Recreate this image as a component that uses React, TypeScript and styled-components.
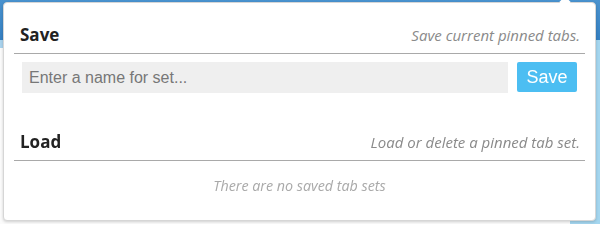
import styled, { createGlobalStyle } from "styled-components";

const Global = createGlobalStyle`
	html, body {
		margin: 0;
		padding: 0;
		width: 600px;
		height: 224px;
		overflow: hidden;
	}
	* {
		box-sizing: border-box;
	}
`;

/* the browser page that peeks out behind the popup */
const Backdrop = styled.div`
	position: relative;
	width: 600px;
	height: 224px;
	display: flex;
	flex-direction: column;
	background-color: #f4f5f6;
`;

const TopBar = styled.div`
	height: 40px;
	background: linear-gradient(#4a93cf, #3580c2);
`;

const PageBody = styled.div`
	flex-grow: 1;
	display: flex;
`;

const PageLeft = styled.div`
	flex-grow: 1;
	border-top: 8px solid #a9d3ee;
	background-color: #fbfbfb;
`;

const PageRight = styled.div`
	width: 30px;
	background-color: #a4d6ef;
`;

/* popup */
const Popup = styled.div`
	position: absolute;
	top: 2px;
	left: 3px;
	width: 593px;
	height: 219px;
	padding: 20px 10px 0;
	background-color: #fff;
	border: 1px solid #d6d6d6;
	border-radius: 4px;
	box-shadow: 0 1px 3px rgba(0, 0, 0, 0.18);
	font-family: "Open Sans", "Liberation Sans", sans-serif;

	&::before {
		content: "";
		position: absolute;
		top: -5px;
		right: 26px;
		width: 8px;
		height: 8px;
		background-color: #fff;
		transform: rotate(45deg);
	}
`;

const Section = styled.section`
	& + & {
		margin-top: 37px;
	}
`;

const SectionHeader = styled.div`
	display: flex;
	justify-content: space-between;
	align-items: baseline;
	padding: 0 5px 6px 6px;
	border-bottom: 1px solid #a9a9a9;
`;

const Title = styled.h2`
	margin: 0;
	font-size: 17px;
	line-height: 24px;
	font-weight: 700;
	color: #222;
`;

const Hint = styled.span`
	font-size: 15px;
	font-style: italic;
	color: #8a8a8a;
`;

/* save form */
const SaveRow = styled.form`
	display: flex;
	gap: 9px;
	padding: 8px 8px 0;
`;

const NameInput = styled.input`
	flex-grow: 1;
	height: 31px;
	padding: 0 8px 0 7px;
	border: none;
	background-color: #efefef;
	font-family: "Liberation Sans", Arial, sans-serif;
	font-size: 16px;
	color: #333;
	caret-color: #222;

	&::placeholder {
		color: #777;
	}
	&:focus-visible {
		outline: none;
	}
`;

const SaveButton = styled.button`
	width: 60px;
	height: 30px;
	padding: 0;
	border: none;
	border-radius: 2px;
	background-color: #4cbef2;
	color: #fff;
	font-family: "Liberation Sans", Arial, sans-serif;
	font-size: 18px;
	cursor: pointer;
`;

const Empty = styled.p`
	margin: 15px 0 0;
	text-align: center;
	font-size: 14.3px;
	line-height: 20px;
	font-style: italic;
	color: #a9a9a9;
`;

export default function App() {
	return (
		<>
			<Global />
			<Backdrop>
				<TopBar />
				<PageBody>
					<PageLeft />
					<PageRight />
				</PageBody>
				<Popup>
					<Section>
						<SectionHeader>
							<Title>Save</Title>
							<Hint>Save current pinned tabs.</Hint>
						</SectionHeader>
						<SaveRow onSubmit={(e) => e.preventDefault()}>
							<NameInput placeholder="Enter a name for set..." autoFocus />
							<SaveButton type="submit">Save</SaveButton>
						</SaveRow>
					</Section>
					<Section>
						<SectionHeader>
							<Title>Load</Title>
							<Hint>Load or delete a pinned tab set.</Hint>
						</SectionHeader>
						<Empty>There are no saved tab sets</Empty>
					</Section>
				</Popup>
			</Backdrop>
		</>
	);
}
